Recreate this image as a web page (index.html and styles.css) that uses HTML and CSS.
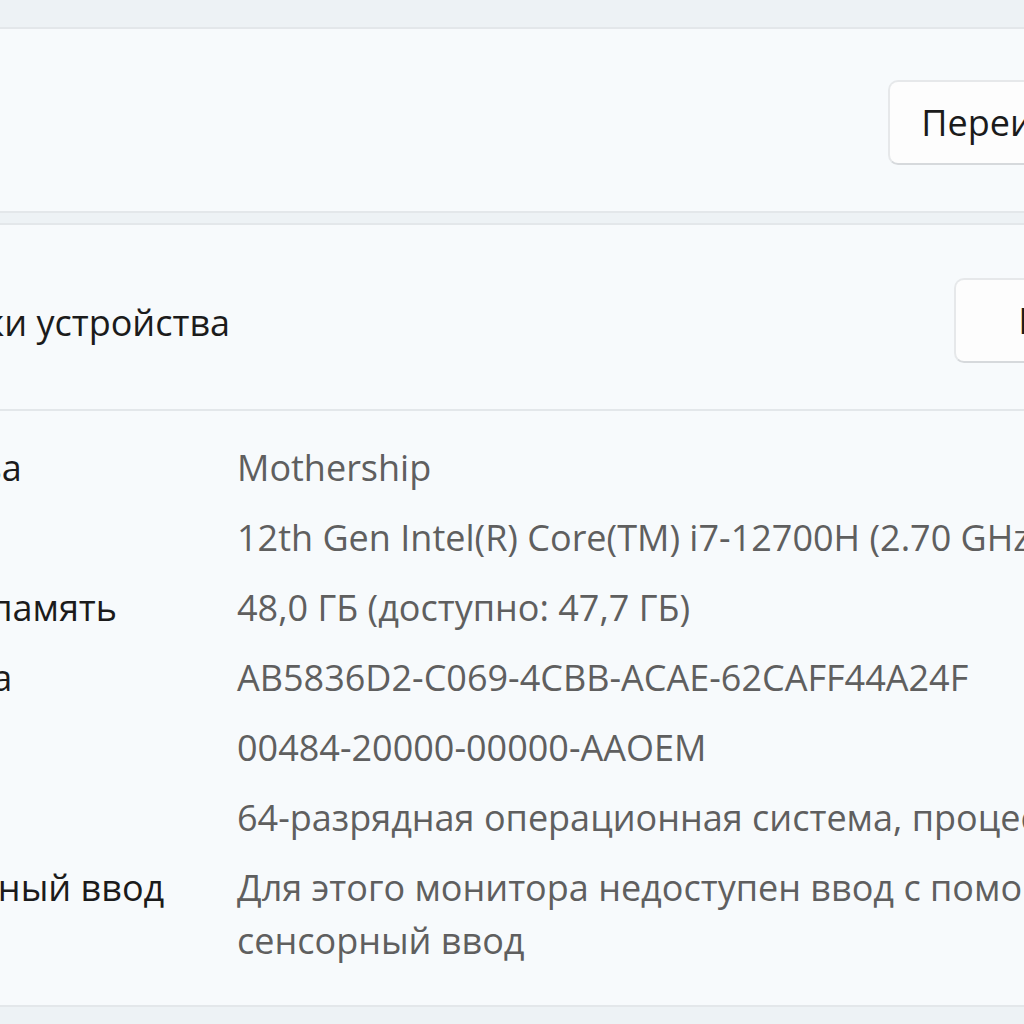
FILE: index.html
```html
<!DOCTYPE html>
<html lang="ru">
<head>
<meta charset="UTF-8" />
<title>О программе</title>
<link rel="stylesheet" href="styles.css">
</head>
<body>
  <div class="page">
    <section class="card card-pc">
      <div class="pc-info"></div>
      <button class="btn">Переименовать этот ПК</button>
    </section>

    <section class="card specs">
      <div class="specs-head">
        <h2 class="specs-title">Характеристики устройства</h2>
        <button class="btn btn-copy">Копировать</button>
        <svg class="chevron" width="30" height="30" viewBox="0 0 16 16" aria-hidden="true">
          <path d="M3 10.5 8 5.5 13 10.5" fill="none" stroke="#1b1b1b" stroke-width="1.2" stroke-linecap="round" stroke-linejoin="round"/>
        </svg>
      </div>
      <dl class="specs-list">
        <div class="spec-row"><dt>Имя устройства</dt><dd>Mothership</dd></div>
        <div class="spec-row"><dt>Процессор</dt><dd>12th Gen Intel(R) Core(TM) i7-12700H (2.70 GHz)</dd></div>
        <div class="spec-row"><dt>Оперативная память</dt><dd>48,0 ГБ (доступно: 47,7 ГБ)</dd></div>
        <div class="spec-row"><dt>Код устройства</dt><dd>AB5836D2-C069-4CBB-ACAE-62CAFF44A24F</dd></div>
        <div class="spec-row"><dt>Код продукта</dt><dd>00484-20000-00000-AAOEM</dd></div>
        <div class="spec-row"><dt>Тип системы</dt><dd>64-разрядная операционная система, процессор x64</dd></div>
        <div class="spec-row"><dt>Перо и сенсорный ввод</dt><dd>Для этого монитора недоступен ввод с помощью пера и<br>сенсорный ввод</dd></div>
      </dl>
    </section>
  </div>
</body>
</html>
```

FILE: styles.css
```css
* {
  box-sizing: border-box;
}
html, body {
  height: 100%;
}
body {
  margin: 0;
  overflow: hidden;
  background: #edf2f5;
  font-family: 'Open Sans', 'Noto Sans', sans-serif;
  color: #1b1b1b;
}
.page {
  margin-left: -297px;
  width: 1690px;
  padding-top: 27px;
  display: flex;
  flex-direction: column;
  gap: 10px;
}
.card {
  background: #f7fafc;
  border: 2px solid #e3e7ea;
  border-radius: 10px;
}
.card-pc {
  height: 186px;
  display: flex;
  align-items: center;
  padding: 4px 15px 0 40px;
}
.pc-info {
  flex: 1;
}
.btn {
  font-family: inherit;
  font-size: 36px;
  color: #1b1b1b;
  background: #fdfdfd;
  border: 2px solid #e6e8ea;
  border-bottom-color: #d6d9dc;
  border-radius: 10px;
  height: 85px;
  padding: 0 31px;
  white-space: nowrap;
}
.specs-head {
  height: 186px;
  display: flex;
  align-items: center;
  padding: 6px 40px 0;
  border-bottom: 2px solid #e3e7ea;
}
.specs-title {
  flex: 1;
  margin: 0;
  padding-top: 4px;
  font-size: 36px;
  font-weight: 400;
}
.btn-copy {
  min-width: 340px;
}
.chevron {
  margin-left: 27px;
}
.specs-list {
  margin: 0;
  padding: 30px 40px 38px;
  display: flex;
  flex-direction: column;
  gap: 17px;
}
.spec-row {
  display: flex;
  font-size: 36px;
  line-height: 53px;
}
.spec-row dt {
  width: 492px;
  flex: none;
  white-space: nowrap;
}
.spec-row dd {
  margin: 0;
  color: #5f5f5f;
  white-space: nowrap;
}
```
